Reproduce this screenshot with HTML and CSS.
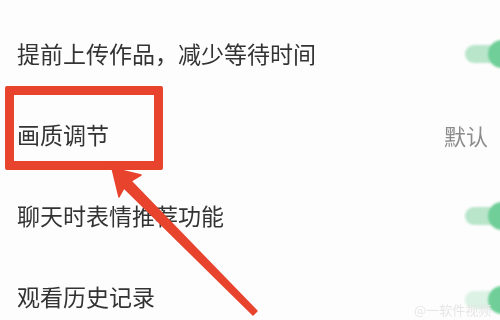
FILE: index.html
```html
<!DOCTYPE html>
<html lang="zh-CN">
<head>
<meta charset="utf-8">
<link rel="stylesheet" href="styles.css">
</head>
<body>
<div class="page">
  <div class="list">
    <div class="row">
      <span class="label">提前上传作品，减少等待时间</span>
      <span class="toggle"><span class="knob"></span></span>
    </div>
    <div class="row">
      <span class="label">画质调节</span>
      <span class="value">默认</span>
    </div>
    <div class="row">
      <span class="label">聊天时表情推荐功能</span>
      <span class="toggle"><span class="knob"></span></span>
    </div>
    <div class="row">
      <span class="label">观看历史记录</span>
      <span class="toggle faded"><span class="knob"></span></span>
    </div>
  </div>
  <div class="highlight"></div>
  <svg class="arrow" width="500" height="320" viewBox="0 0 500 320">
    <polygon points="112,168 141,175 131,181 257,311 253,315 124,188 119,197" fill="#e8432d" stroke="#e8432d" stroke-width="1.5" stroke-linejoin="round"/>
  </svg>
  <div class="watermark">@一软件视频</div>
</div>
</body>
</html>
```
FILE: styles.css
```css
html, body {
  margin: 0;
  padding: 0;
  background: #fdfdfd;
}
.page {
  position: relative;
  width: 500px;
  height: 320px;
  overflow: hidden;
  font-family: "Noto Sans CJK SC", "Noto Sans", sans-serif;
}
.list {
  padding-top: 13px;
  display: flex;
  flex-direction: column;
}
.row {
  height: 81px;
  display: flex;
  align-items: center;
  justify-content: space-between;
  padding-left: 17px;
}
.label {
  font-size: 23px;
  color: #333333;
  line-height: 1;
  filter: blur(0.4px);
}
.value {
  font-size: 22px;
  color: #8c8c8c;
  margin-right: 12px;
  line-height: 1;
  filter: blur(0.4px);
}
.toggle {
  position: relative;
  width: 52px;
  height: 18px;
  border-radius: 9px;
  background: #b9e5cb;
  margin-right: -17px;
  filter: blur(1px);
}
.knob {
  position: absolute;
  left: 23px;
  top: -5px;
  width: 28px;
  height: 28px;
  border-radius: 50%;
  background: #70cf98;
}
.toggle.faded {
  background: #dcf2e5;
  margin-top: 6px;
}
.highlight {
  position: absolute;
  left: 5px;
  top: 86px;
  width: 140px;
  height: 66px;
  border: 9px solid #e8432d;
  border-radius: 2px;
}
.arrow {
  position: absolute;
  left: 0;
  top: 0;
}
.watermark {
  position: absolute;
  left: 414px;
  top: 301px;
  font-size: 13px;
  line-height: 18px;
  color: #e6e6e6;
  white-space: nowrap;
  filter: blur(0.6px);
}
```
